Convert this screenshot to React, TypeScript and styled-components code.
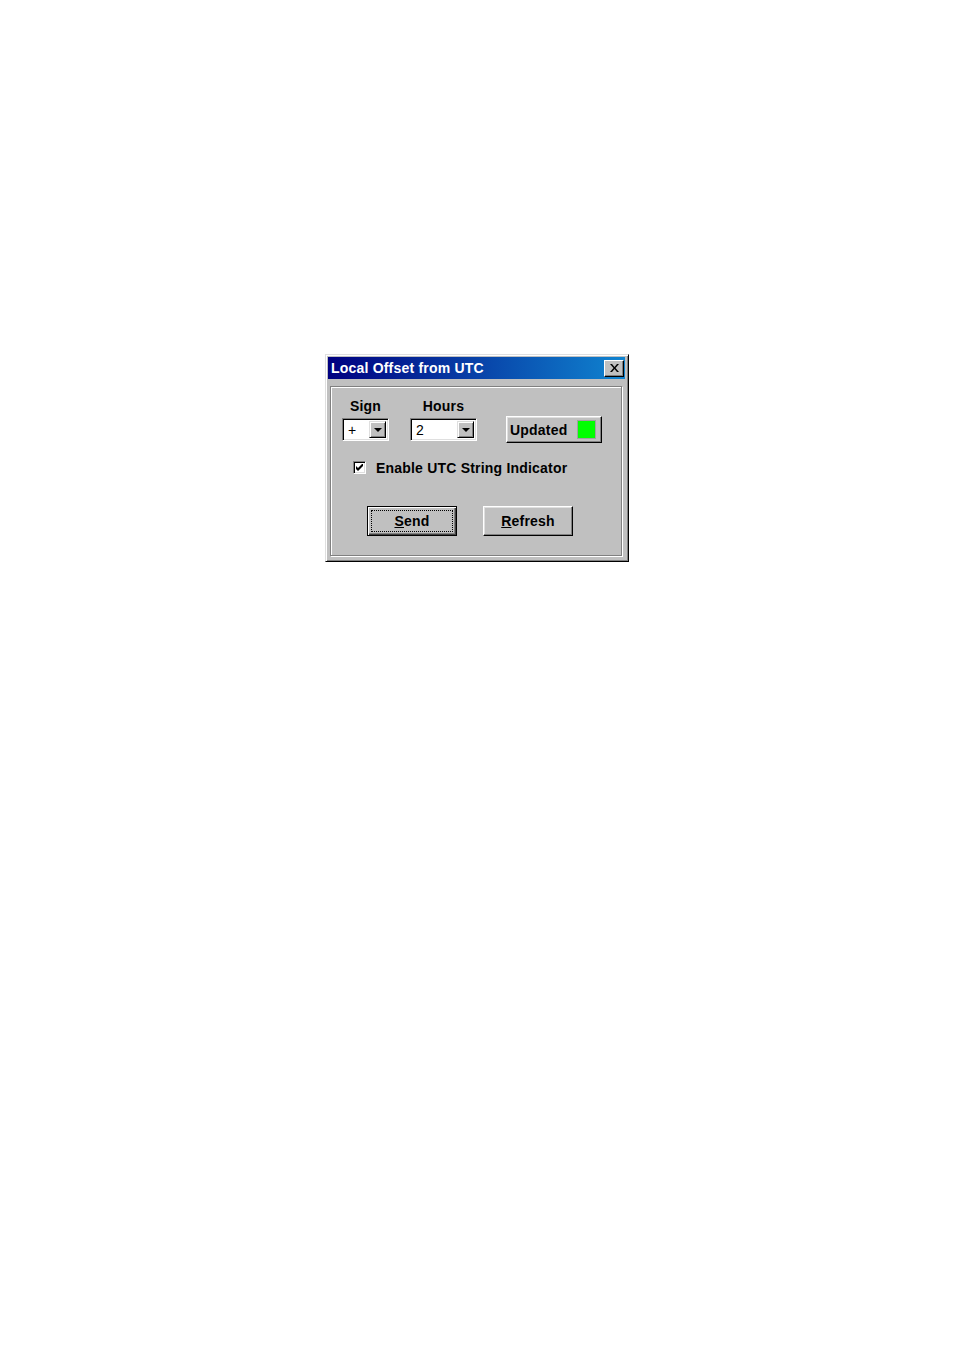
import React from "react";
import styled, { createGlobalStyle } from "styled-components";

const GlobalBody = createGlobalStyle`
  html, body {
    margin: 0;
    padding: 0;
    background: #ffffff;
  }
  body {
    font-family: "Liberation Sans", Arial, sans-serif;
  }
`;

const Page = styled.div`
  width: 954px;
  height: 1350px;
  padding: 354px 0 0 325px;
  box-sizing: border-box;
`;

const Window = styled.div`
  width: 304px;
  box-sizing: border-box;
  background: #c0c0c0;
  border: 1px solid;
  border-color: #dfdfdf #000000 #000000 #dfdfdf;
  box-shadow: inset 1px 1px 0 #ffffff, inset -1px -1px 0 #808080;
  padding: 2px 3px 5px 2px;
  display: flex;
  flex-direction: column;
`;

const TitleBar = styled.div`
  height: 22px;
  display: flex;
  align-items: center;
  justify-content: space-between;
  padding: 0 1px 0 3px;
  background: linear-gradient(to right, #000080, #1084d0);
  color: #ffffff;
  font-weight: bold;
  font-size: 14px;
`;

const TitleText = styled.span`
  letter-spacing: 0.2px;
`;

const CloseButton = styled.div`
  width: 20px;
  height: 17px;
  box-sizing: border-box;
  background: #c0c0c0;
  border: 1px solid;
  border-color: #ffffff #000000 #000000 #ffffff;
  box-shadow: inset -1px -1px 0 #808080;
  display: flex;
  align-items: center;
  justify-content: center;
`;

const Body = styled.div`
  padding: 7px 3px 0 2px;
`;

const GroupBox = styled.div`
  height: 170px;
  box-sizing: border-box;
  border: 1px solid #808080;
  box-shadow: 1px 1px 0 #ffffff, inset 1px 1px 0 #ffffff;
  padding: 11px 0 0 11px;
  font-size: 14px;
  font-weight: bold;
  letter-spacing: 0.2px;
  color: #000000;
`;

const TopRow = styled.div`
  display: flex;
  align-items: flex-end;
`;

const Field = styled.div<{ $gap: number }>`
  display: flex;
  flex-direction: column;
  align-items: center;
  margin-right: ${(p) => p.$gap}px;
`;

const FieldLabel = styled.div`
  height: 16px;
  line-height: 16px;
  margin-bottom: 4px;
`;

const Combo = styled.div<{ $width: number }>`
  width: ${(p) => p.$width}px;
  height: 23px;
  box-sizing: border-box;
  background: #ffffff;
  border: 1px solid;
  border-color: #808080 #ffffff #ffffff #808080;
  box-shadow: inset 1px 1px 0 #000000, inset -1px -1px 0 #dfdfdf;
  display: flex;
  align-items: center;
  padding: 2px;
`;

const ComboValue = styled.div`
  flex: 1;
  padding-left: 3px;
  font-size: 14px;
  font-weight: normal;
`;

const DropButton = styled.div`
  width: 17px;
  height: 17px;
  box-sizing: border-box;
  background: #c0c0c0;
  border: 1px solid;
  border-color: #dfdfdf #000000 #000000 #dfdfdf;
  box-shadow: inset 1px 1px 0 #ffffff, inset -1px -1px 0 #808080;
  display: flex;
  align-items: center;
  justify-content: center;
`;

const Arrow = styled.div`
  width: 0;
  height: 0;
  border-left: 4px solid transparent;
  border-right: 4px solid transparent;
  border-top: 4px solid #000000;
`;

const StatusButton = styled.div`
  width: 96px;
  height: 27px;
  box-sizing: border-box;
  margin-bottom: -2px;
  background: #c0c0c0;
  border: 1px solid;
  border-color: #ffffff #000000 #000000 #ffffff;
  box-shadow: inset -1px -1px 0 #808080, inset 1px 1px 0 #dfdfdf;
  display: flex;
  align-items: center;
  padding: 0 5px 0 3px;
  justify-content: space-between;
`;

const Lamp = styled.div<{ $color: string }>`
  width: 19px;
  height: 19px;
  box-sizing: border-box;
  background: ${(p) => p.$color};
  border: 1px solid #a0a0a0;
`;

const CheckRow = styled.label`
  display: flex;
  align-items: center;
  margin: 20px 0 0 11px;
  height: 13px;
`;

const CheckBox = styled.div`
  width: 13px;
  height: 13px;
  box-sizing: border-box;
  background: #ffffff;
  border: 1px solid;
  border-color: #808080 #ffffff #ffffff #808080;
  box-shadow: inset 1px 1px 0 #000000, inset -1px -1px 0 #dfdfdf;
  margin-right: 10px;
  display: flex;
  align-items: center;
  justify-content: center;
`;

const ButtonRow = styled.div`
  display: flex;
  gap: 26px;
  margin: 32px 0 0 25px;
`;

const PushButton = styled.div<{ $focused?: boolean }>`
  width: 90px;
  height: 30px;
  box-sizing: border-box;
  background: #c0c0c0;
  border: 1px solid #000000;
  border-color: ${(p) => (p.$focused ? "#000000" : "#ffffff #000000 #000000 #ffffff")};
  box-shadow: ${(p) =>
    p.$focused
      ? "inset 1px 1px 0 #ffffff, inset -1px -1px 0 #404040, inset -2px -2px 0 #808080"
      : "inset -1px -1px 0 #808080, inset 1px 1px 0 #dfdfdf"};
  display: flex;
  align-items: center;
  justify-content: center;
  padding: 3px;
`;

const FocusRing = styled.div`
  width: 100%;
  height: 100%;
  box-sizing: border-box;
  border: 1px dotted #000000;
  display: flex;
  align-items: center;
  justify-content: center;
`;

const Mnemonic = styled.span`
  text-decoration: underline;
`;

const App = () => {
  return (
    <>
      <GlobalBody />
      <Page>
        <Window>
          <TitleBar>
            <TitleText>Local Offset from UTC</TitleText>
            <CloseButton>
              <svg width="9" height="8" viewBox="0 0 9 8">
                <path d="M0 0h2l2.5 3 2.5-3h2L5.5 4 9 8H7L4.5 5 2 8H0l3.5-4z" fill="#000" />
              </svg>
            </CloseButton>
          </TitleBar>
          <Body>
            <GroupBox>
              <TopRow>
                <Field $gap={21}>
                  <FieldLabel>Sign</FieldLabel>
                  <Combo $width={47}>
                    <ComboValue>+</ComboValue>
                    <DropButton>
                      <Arrow />
                    </DropButton>
                  </Combo>
                </Field>
                <Field $gap={29}>
                  <FieldLabel>Hours</FieldLabel>
                  <Combo $width={67}>
                    <ComboValue>2</ComboValue>
                    <DropButton>
                      <Arrow />
                    </DropButton>
                  </Combo>
                </Field>
                <StatusButton>
                  <span>Updated</span>
                  <Lamp $color="#00ff00" />
                </StatusButton>
              </TopRow>
              <CheckRow>
                <CheckBox>
                  <svg width="7" height="7" viewBox="0 0 7 7">
                    <path d="M0 2v3l2 2 5-5V-1L2 4z" fill="#000" />
                  </svg>
                </CheckBox>
                Enable UTC String Indicator
              </CheckRow>
              <ButtonRow>
                <PushButton $focused>
                  <FocusRing>
                    <span>
                      <Mnemonic>S</Mnemonic>end
                    </span>
                  </FocusRing>
                </PushButton>
                <PushButton>
                  <span>
                    <Mnemonic>R</Mnemonic>efresh
                  </span>
                </PushButton>
              </ButtonRow>
            </GroupBox>
          </Body>
        </Window>
      </Page>
    </>
  );
};

export default App;
